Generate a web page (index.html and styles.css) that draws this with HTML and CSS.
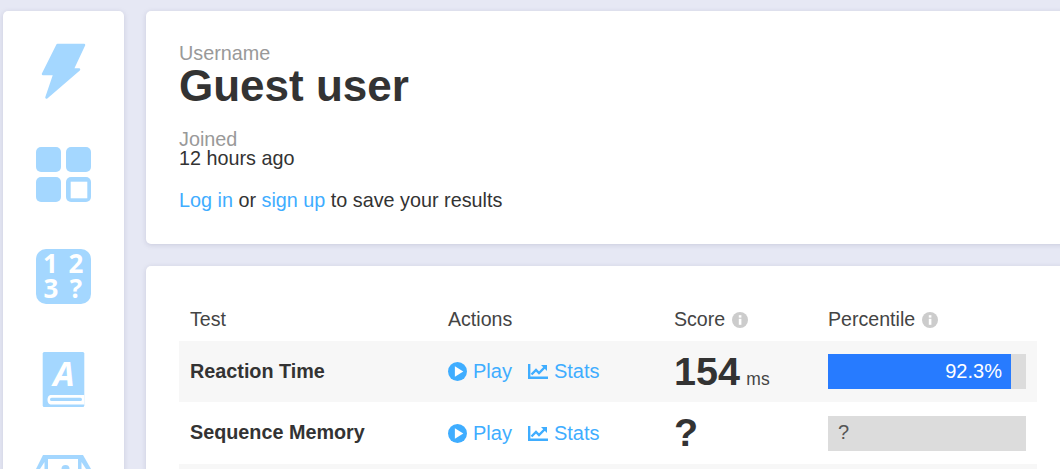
FILE: index.html
```html
<!DOCTYPE html>
<html lang="en">
<head>
<meta charset="utf-8">
<title>Dashboard</title>
<link rel="stylesheet" href="styles.css">
</head>
<body>
<div class="page">
  <nav class="sidebar">
    <svg class="nav-icon" viewBox="0 0 55 55"><path class="fill bolt" d="M21.500 1H48L36.500 25.500H43L10.500 53.500L18.500 30H7Z"/></svg>
    <svg class="nav-icon" viewBox="0 0 55 55"><rect class="fill" x="0" y="0" width="25" height="25" rx="5"/><rect class="fill" x="30" y="0" width="25" height="25" rx="5"/><rect class="fill" x="0" y="30" width="25" height="25" rx="5"/><rect class="fill" x="30" y="30" width="25" height="25" rx="5"/><rect class="white" x="34.700" y="34.700" width="16.600" height="16.600"/></svg>
    <svg class="nav-icon" viewBox="0 0 55 55"><rect class="fill" width="55" height="55" rx="10"/><text class="digit" x="14.500" y="24" text-anchor="middle">1</text><text class="digit" x="40" y="24" text-anchor="middle">2</text><text class="digit" x="15" y="49" text-anchor="middle">3</text><text class="digit" x="40" y="49" text-anchor="middle">?</text></svg>
    <svg class="nav-icon" viewBox="0 0 55 55"><rect class="fill" x="6.700" y="0" width="41.600" height="55" rx="1.500"/><path class="book-page" d="M48.300 43H14.500C10.500 43 10.500 52.500 14.500 52.500H48.300"/><rect class="fill" x="14" y="45.800" width="32" height="3.200" rx="1.600"/><text class="letter" x="28" y="33.500" text-anchor="middle">A</text></svg>
    <svg class="nav-icon" viewBox="0 0 55 55"><path class="fill" d="M7 0H47L55 14V20H0V14Z"/><rect class="white" x="12" y="4" width="30" height="20"/><path class="white" d="M4 14L8.500 7V20H4ZM50 14L45.500 7V20H50Z"/><circle class="fill" cx="29.500" cy="14" r="4"/></svg>
  </nav>
  <main class="content">
    <section class="card profile">
      <div class="label">Username</div>
      <h1 class="username">Guest user</h1>
      <div class="joined">
        <div class="label">Joined</div>
        <div class="joined-value">12 hours ago</div>
      </div>
      <p class="save-note"><a href="#">Log in</a> or <a href="#">sign up</a> to save your results</p>
    </section>
    <section class="card results">
      <div class="row head">
        <div>Test</div>
        <div>Actions</div>
        <div class="head-cell">Score <svg class="info" viewBox="0 0 16 16"><circle cx="8" cy="8" r="8"/><rect x="6.800" y="6.800" width="2.600" height="6" fill="#fff"/><rect x="6.800" y="3.200" width="2.600" height="2.400" fill="#fff"/></svg></div>
        <div class="head-cell">Percentile <svg class="info" viewBox="0 0 16 16"><circle cx="8" cy="8" r="8"/><rect x="6.800" y="6.800" width="2.600" height="6" fill="#fff"/><rect x="6.800" y="3.200" width="2.600" height="2.400" fill="#fff"/></svg></div>
      </div>
      <div class="row shaded">
        <div class="test-name">Reaction Time</div>
        <div class="actions">
          <a href="#" class="action"><svg class="play" viewBox="0 0 18 18"><circle cx="9" cy="9" r="9"/><path d="M6.500 4L14.500 9L6.500 14Z" fill="#fff"/></svg>Play</a>
          <a href="#" class="action"><svg class="stats" viewBox="0 0 20 15"><path d="M1.200 0V13.700H20" fill="none" stroke-width="2.400"/><path d="M3.500 10.500L8 6L11 9L16.500 3.500" fill="none" stroke-width="2.400"/><path d="M13 1H19V7Z" class="solid"/></svg>Stats</a>
        </div>
        <div class="score"><span class="score-num">154</span> <span class="unit">ms</span></div>
        <div class="bar"><div class="bar-fill" style="width: 92.4%">92.3%</div></div>
      </div>
      <div class="row row-tall">
        <div class="test-name">Sequence Memory</div>
        <div class="actions">
          <a href="#" class="action"><svg class="play" viewBox="0 0 18 18"><circle cx="9" cy="9" r="9"/><path d="M6.500 4L14.500 9L6.500 14Z" fill="#fff"/></svg>Play</a>
          <a href="#" class="action"><svg class="stats" viewBox="0 0 20 15"><path d="M1.200 0V13.700H20" fill="none" stroke-width="2.400"/><path d="M3.500 10.500L8 6L11 9L16.500 3.500" fill="none" stroke-width="2.400"/><path d="M13 1H19V7Z" class="solid"/></svg>Stats</a>
        </div>
        <div class="score"><span class="score-num">?</span></div>
        <div class="bar"><div class="bar-empty">?</div></div>
      </div>
      <div class="row shaded"></div>
    </section>
  </main>
</div>
</body>
</html>
```
FILE: styles.css
```css
* { box-sizing: border-box; }
html, body { margin: 0; height: 100%; overflow: hidden; }
body { background: #e6e8f4; font-family: "Liberation Sans", Arial, sans-serif; color: #333; }
a { color: #3fadff; text-decoration: none; }
.page { display: flex; align-items: flex-start; padding: 11px 0 0 3px; gap: 22px; width: 1060px; height: 469px; overflow: hidden; }
.sidebar { flex: none; width: 121px; height: 700px; background: #fff; border-radius: 5px; box-shadow: 0 1px 5px rgba(100,100,140,.22); display: flex; flex-direction: column; align-items: center; padding-top: 33px; gap: 47.67px; }
.nav-icon { width: 55px; height: 55px; display: block; flex: none; overflow: visible; }
.fill { fill: #a4d7ff; }
.bolt { stroke: #a4d7ff; stroke-width: 2.500; stroke-linejoin: round; }
.white { fill: #fff; }
.book-page { fill: #fff; }
.digit { fill: #fff; font: 700 26px "Open Sans", sans-serif; }
.letter { fill: #fff; font: italic 700 34px "Open Sans", sans-serif; }
.content { flex: 1; min-width: 0; display: flex; flex-direction: column; gap: 22px; margin-right: -40px; }
.card { background: #fff; border-radius: 5px; box-shadow: 0 1px 5px rgba(100,100,140,.22); }
.profile { height: 233px; padding: 32px 33px; }
.label { font-size: 19.800px; line-height: 20px; color: #999; }
.username { margin: 0; font-size: 44px; line-height: 46px; font-weight: 700; color: #333; }
.joined { margin-top: 20px; }
.joined-value { font-size: 19.800px; line-height: 18px; color: #333; }
.save-note { margin: 22px 0 0; font-size: 19.800px; line-height: 22px; color: #333; }
.results { padding: 34px 63px 0 33px; }
.row { display: grid; grid-template-columns: 258px 226px 154px 198px; height: 61px; align-items: center; padding: 0 11px; width: 858px; }
.row-tall { height: 62px; }
.row-tall .test-name { margin-bottom: 2px; }
.head { height: 41px; padding-bottom: 2px; font-size: 19.600px; color: #444; }
.head-cell { display: flex; align-items: center; gap: 7px; }
.shaded { background: #f7f7f7; }
.test-name { font-size: 19.800px; font-weight: 700; color: #333; }
.actions { display: flex; gap: 16px; }
.action { display: flex; align-items: center; font-size: 20px; gap: 6px; }
.info { width: 16px; height: 16px; fill: #ccc; }
.play { width: 19px; height: 19px; fill: #3fadff; }
.stats { width: 20px; height: 15px; stroke: #3fadff; }
.stats .solid { fill: #3fadff; stroke: none; }
.score { line-height: 1; white-space: nowrap; }
.score-num { font-size: 39.500px; font-weight: 700; color: #333; }
.unit { font-size: 17.500px; color: #444; margin-left: 2px; }
.bar { height: 35px; background: #dcdcdc; width: 198px; }
.bar-fill { height: 100%; background: #277bff; color: #fff; font-size: 20px; line-height: 35px; text-align: right; padding-right: 9px; }
.bar-empty { height: 100%; color: #555; font-size: 20px; line-height: 32px; padding-left: 10px; }
```
